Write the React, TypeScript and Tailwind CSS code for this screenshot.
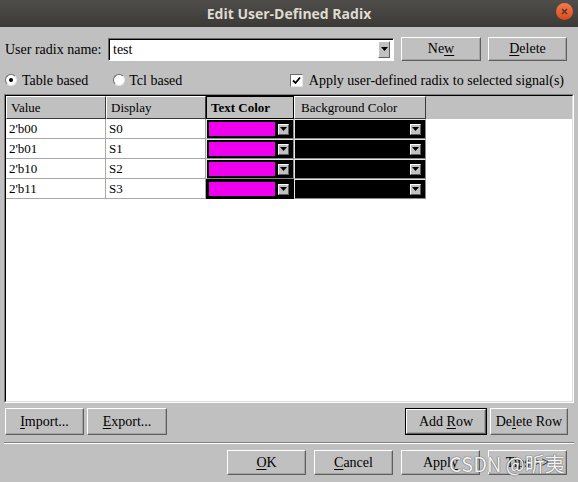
import React from 'react';

const rows = [
  { value: "2'b00", display: 'S0' },
  { value: "2'b01", display: 'S1' },
  { value: "2'b10", display: 'S2' },
  { value: "2'b11", display: 'S3' },
];

function Button({ children, className = '', isDefault = false }: { children: React.ReactNode; className?: string; isDefault?: boolean }) {
  return (
    <div className={`flex ${isDefault ? 'border border-black' : ''} ${className}`}>
      <div className="flex-1 flex items-center justify-center border border-t-white border-l-white border-b-[#5e5e5e] border-r-[#5e5e5e] shadow-[inset_-1px_-1px_0_#a2a2a2] text-[14px] text-black leading-none">
        <span className="whitespace-pre">{children}</span>
      </div>
    </div>
  );
}

function Arrow({ className = '' }: { className?: string }) {
  return (
    <div className={`shrink-0 bg-[#c0c0c0] border border-t-white border-l-white border-b-[#5e5e5e] border-r-[#5e5e5e] flex items-center justify-center ${className}`}>
      <svg width="7" height="4" viewBox="0 0 7 4">
        <path d="M0 0h7L3.5 4z" fill="#000" />
      </svg>
    </div>
  );
}

function ColorCell({ color, width, focus = false }: { color: string; width: string; focus?: boolean }) {
  return (
    <div className={`${width} h-full flex border ${focus ? 'border-black' : 'border-t-[#e8e8e8] border-l-[#e8e8e8] border-b-[#8a8a8a] border-r-[#8a8a8a]'} bg-[#c0c0c0]`}>
      <div className="flex-1 flex items-center bg-black pl-[2px] pr-[4px] py-[2px] gap-[3px]">
        <div className="flex-1 h-full" style={{ background: color }} />
        <Arrow className="w-[11px] h-[11px]" />
      </div>
    </div>
  );
}

function Radio({ checked = false }: { checked?: boolean }) {
  return (
    <div className="w-[12px] h-[12px] rounded-full bg-white border border-t-[#6b6b6b] border-l-[#6b6b6b] border-b-[#e6e6e6] border-r-[#e6e6e6] flex items-center justify-center">
      {checked && <div className="w-[4px] h-[4px] rounded-full bg-black" />}
    </div>
  );
}

export default function App() {
  return (
    <div className="w-[578px] h-[482px] bg-[#c0c0c0] overflow-hidden relative font-['Liberation_Serif',serif] text-black">
      {/* title bar */}
      <div className="h-[27px] bg-gradient-to-b from-[#4f4e4a] to-[#3b3a36] flex items-center justify-center relative">
        <span className="font-['Open_Sans',sans-serif] font-bold text-[14px] text-[#dfdbd2]">Edit User-Defined Radix</span>
        <div className="absolute left-[556px] top-[3px] w-[17px] h-[17px] rounded-full bg-gradient-to-b from-[#f47a4b] to-[#dd4814] flex items-center justify-center">
          <svg width="7" height="7" viewBox="0 0 7 7">
            <path d="M1 1l5 5M6 1L1 6" stroke="#3c3b37" strokeWidth="1.4" />
          </svg>
        </div>
      </div>

      {/* radix name row */}
      <div className="flex items-center h-[24px] mt-[10px] pl-[5px] text-[14px]">
        <span className="w-[103px]">User radix name:</span>
        <div className="w-[286px] h-[23px] flex items-center bg-white border border-t-[#6b6b6b] border-l-[#6b6b6b] border-b-white border-r-white shadow-[inset_1px_1px_0_#000]">
          <span className="flex-1 pl-[4px]">test</span>
          <Arrow className="w-[12px] h-[17px] mr-[3px]" />
        </div>
        <Button className="w-[80px] h-[24px] ml-[7px]">Ne<u className="underline-offset-[2px]">w</u></Button>
        <Button className="w-[79px] h-[24px] ml-[7px]"><u className="underline-offset-[2px]">D</u>elete</Button>
      </div>

      {/* mode row */}
      <div className="flex items-center h-[20px] mt-[9px] pl-[5px] pr-[14px] text-[14px]">
        <Radio checked />
        <span className="ml-[5px]">Table based</span>
        <div className="ml-[25px]"><Radio /></div>
        <span className="ml-[4px]">Tcl based</span>
        <div className="ml-auto flex items-center">
          <div className="w-[13px] h-[13px] bg-white border border-t-[#6b6b6b] border-l-[#6b6b6b] border-b-[#e6e6e6] border-r-[#e6e6e6] flex items-center justify-center">
            <svg width="9" height="9" viewBox="0 0 9 9">
              <path d="M1 4.5l2.5 2.5L8 1.5" stroke="#000" strokeWidth="1.8" fill="none" />
            </svg>
          </div>
          <span className="ml-[6px]">Apply user-defined radix to selected signal(s)</span>
        </div>
      </div>

      {/* table */}
      <div className="mx-[4px] mt-[4px] h-[309px] border border-t-[#808080] border-l-[#808080] border-b-white border-r-white">
        <div className="h-full border border-t-black border-l-black border-b-[#dcdcdc] border-r-[#dcdcdc] bg-white flex flex-col text-[13px]">
          <div className="flex h-[23px] bg-[#c0c0c0] shrink-0">
            <div className="w-[100px] flex items-center pl-[4px] border border-t-white border-l-white border-b-[#3a3a3a] border-r-[#3a3a3a]">Value</div>
            <div className="w-[100px] flex items-center pl-[4px] border border-t-white border-l-white border-b-[#3a3a3a] border-r-[#3a3a3a]">Display</div>
            <div className="w-[88px] flex items-center pl-[4px] border border-black font-bold">Text Color</div>
            <div className="w-[132px] flex items-center pl-[6px] border border-t-white border-l-white border-b-[#3a3a3a] border-r-[#3a3a3a]">Background Color</div>
            <div className="flex-1" />
          </div>
          {rows.map((r, i) => (
            <div key={r.value} className="flex h-[20px] shrink-0">
              <div className="w-[100px] flex items-center pl-[3px] border-r border-b border-[#a8a8a8]">{r.value}</div>
              <div className="w-[100px] flex items-center pl-[3px] border-r border-b border-[#a8a8a8]">{r.display}</div>
              <ColorCell color="#ee00ee" width="w-[88px]" focus={i === 3} />
              <ColorCell color="#000000" width="w-[132px]" />
              <div className="flex-1" />
            </div>
          ))}
        </div>
      </div>

      {/* table buttons */}
      <div className="flex h-[27px] mt-[5px] px-[5px] text-[14px]">
        <Button className="w-[79px]"><u className="underline-offset-[2px]">I</u>mport...</Button>
        <Button className="w-[80px] ml-[3px]"><u className="underline-offset-[2px]">E</u>xport...</Button>
        <Button className="w-[82px] ml-auto" isDefault>Add <u className="underline-offset-[2px]">R</u>ow</Button>
        <Button className="w-[78px] ml-[3px] mr-[5px]">De<u className="underline-offset-[2px]">l</u>ete Row</Button>
      </div>

      <div className="mx-[4px] mt-[7px] border-t border-b border-t-[#808080] border-b-white" />

      {/* dialog buttons */}
      <div className="flex justify-end gap-[8px] h-[25px] mt-[6px] pr-[11px]">
        <Button className="w-[79px]"><u className="underline-offset-[2px]">O</u>K</Button>
        <Button className="w-[79px]"><u className="underline-offset-[2px]">C</u>ancel</Button>
        <Button className="w-[79px]">Appl<u className="underline-offset-[2px]">y</u></Button>
        <Button className="w-[79px]">Tips &gt;&gt;</Button>
      </div>

      {/* watermark */}
      <div className="absolute left-[449px] top-[449px] text-[20px] text-[#f2f2f2] font-['Noto_Sans_CJK_SC',sans-serif] [text-shadow:0_0_1px_#555,0_0_1px_#555]">
        CSDN @昕夷
      </div>
    </div>
  );
}
